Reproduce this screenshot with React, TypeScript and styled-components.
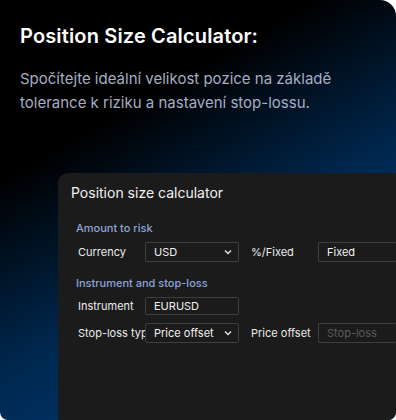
import React from "react";
import styled, { createGlobalStyle } from "styled-components";

const Global = createGlobalStyle`
  html, body { margin: 0; padding: 0; background: #ffffff; }
  * { box-sizing: border-box; }
`;

const Card = styled.div`
  width: 396px;
  height: 420px;
  overflow: hidden;
  border-radius: 0 16px 8px 8px;
  background: linear-gradient(150deg, #000000 28%, #00284f 58%, #003a78 90%);
  display: flex;
  flex-direction: column;
  font-family: "Inter", "Open Sans", sans-serif;
`;

const Intro = styled.div`
  padding: 23px 20px 0 20px;
  display: flex;
  flex-direction: column;
`;

const Heading = styled.h1`
  margin: 0;
  font-family: "Inter", sans-serif;
  font-weight: 600;
  font-size: 20px;
  line-height: 26px;
  color: #ffffff;
  letter-spacing: 0.15px;
`;

const Lead = styled.p`
  margin: 18px 0 0 0;
  font-family: "Inter", sans-serif;
  font-size: 15px;
  line-height: 24px;
  color: #a6aec3;
  font-weight: 400;
`;

const Panel = styled.div`
  margin: 58px 0 0 58px;
  flex: 1;
  background: #1b1b1b;
  border-radius: 10px 0 0 0;
  padding: 10px 0 0 13px;
  display: flex;
  flex-direction: column;
`;

const PanelTitle = styled.div`
  font-family: "Inter", sans-serif;
  font-size: 14px;
  line-height: 19px;
  color: #f2f2f2;
  font-weight: 400;
`;

const Section = styled.div<{ $top: number }>`
  margin-top: ${(p) => p.$top}px;
  padding-left: 7px;
  display: flex;
  flex-direction: column;
`;

const SectionTitle = styled.div`
  margin-left: -2px;
  font-family: "Inter", sans-serif;
  font-size: 11px;
  line-height: 14px;
  font-weight: 500;
  color: #8ea3da;
`;

const Row = styled.div<{ $top: number }>`
  margin-top: ${(p) => p.$top}px;
  display: grid;
  grid-template-columns: 67px 94px 12px 67px 1fr;
  align-items: center;
`;

const Label = styled.div`
  font-family: "Inter", sans-serif;
  font-size: 11px;
  color: #ececec;
  white-space: nowrap;
  overflow: hidden;
`;

const Field = styled.div<{ $h?: number; $muted?: boolean }>`
  height: ${(p) => p.$h ?? 20}px;
  border: 1px solid #3e3e3e;
  border-radius: 2px;
  background: #1b1b1b;
  display: flex;
  align-items: center;
  justify-content: space-between;
  padding: 0 6px 0 8px;
  font-family: "Inter", sans-serif;
  font-size: 11px;
  color: ${(p) => (p.$muted ? "#5a5a5a" : "#f2f2f2")};
  border-right-width: ${(p) => (p.$muted !== undefined ? 0 : 1)}px;
`;

const Chevron = () => (
  <svg width="8" height="6" viewBox="0 0 8 6">
    <path d="M1 1.5 L4 4.5 L7 1.5" fill="none" stroke="#e0e0e0" strokeWidth="1.5" />
  </svg>
);

export default function App() {
  return (
    <>
      <Global />
      <Card>
        <Intro>
          <Heading>Position Size Calculator:</Heading>
          <Lead>
            Spočítejte ideální velikost pozice na základě
            <br />
            tolerance k riziku a nastavení stop-lossu.
          </Lead>
        </Intro>
        <Panel>
          <PanelTitle>Position size calculator</PanelTitle>
          <Section $top={19}>
            <SectionTitle>Amount to risk</SectionTitle>
            <Row $top={7}>
              <Label>Currency</Label>
              <Field>
                USD <Chevron />
              </Field>
              <span />
              <Label>%/Fixed</Label>
              <Field $muted={false}>Fixed</Field>
            </Row>
          </Section>
          <Section $top={14}>
            <SectionTitle>Instrument and stop-loss</SectionTitle>
            <Row $top={7}>
              <Label>Instrument</Label>
              <Field $h={18}>EURUSD</Field>
            </Row>
            <Row $top={8}>
              <Label>Stop-loss type</Label>
              <Field>
                Price offset <Chevron />
              </Field>
              <span />
              <Label>Price offset</Label>
              <Field $muted={true}>Stop-loss</Field>
            </Row>
          </Section>
        </Panel>
      </Card>
    </>
  );
}
